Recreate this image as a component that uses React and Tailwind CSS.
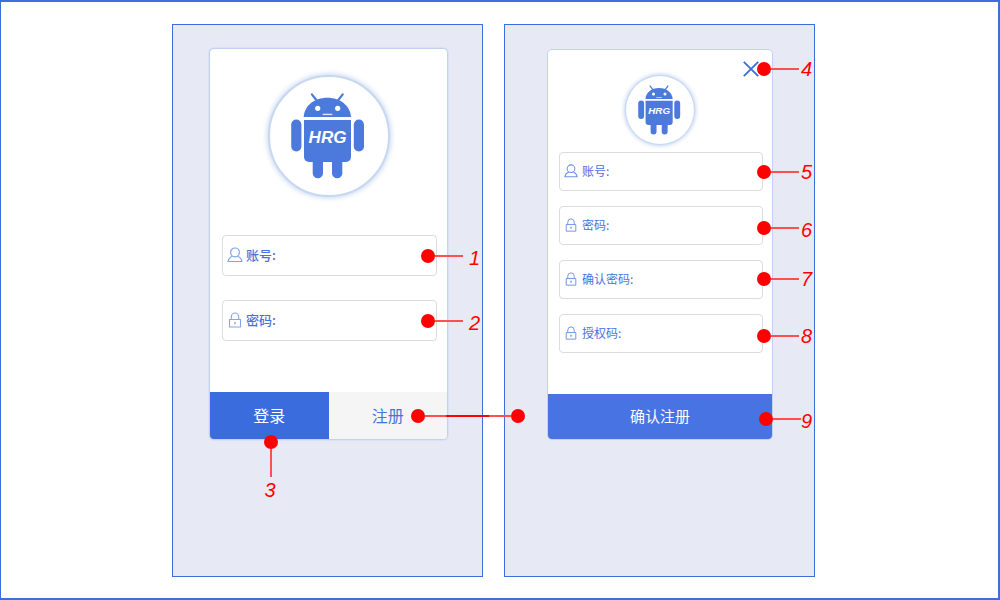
import React from "react";

function UserIcon({ className }) {
  return (
    <svg viewBox="0 0 16 16" className={className} fill="none" stroke="currentColor" strokeWidth="1.2" aria-hidden="true">
      <circle cx="8" cy="5.4" r="4.4" />
      <path d="M5.4 9.2C3 10.2 1.4 12 1 14.5H15C14.6 12 13 10.2 10.6 9.2" />
    </svg>
  );
}

function LockIcon({ className }) {
  return (
    <svg viewBox="0 0 16 16" className={className} fill="none" stroke="currentColor" strokeWidth="1.1" aria-hidden="true">
      <path d="M2.5 7.5H13.5V15H2.5Z" />
      <path d="M4.3 7.5V4.9A3.7 3.9 0 0 1 11.7 4.9V7.5" />
      <path d="M7.2 10.5H8.8M8 10.5V12.6" />
    </svg>
  );
}

function RobotLogo({ className }) {
  return (
    <svg viewBox="0 0 118 118" className={className} role="img" aria-label="HRG">
      <g transform="translate(-2 -2)" fill="#4c7adc">
        <path d="M43.9 19.4L49 26M74.7 19.4L69.6 26" stroke="#4c7adc" strokeWidth="2.2" strokeLinecap="round" />
        <path d="M35.7 42C36.2 31 46 22.7 59.3 22.7S82.4 31 83 42Z" />
        <path d="M36 45H83V82A5 5 0 0 1 78 87H41A5 5 0 0 1 36 82Z" />
        <rect x="23.2" y="44.5" width="10.2" height="32" rx="5.1" />
        <rect x="85.8" y="44.5" width="10.2" height="32" rx="5.1" />
        <path d="M44.7 84H55V98.2A5.15 5.15 0 0 1 44.7 98.2Z" />
        <path d="M64 84H74.3V98.2A5.15 5.15 0 0 1 64 98.2Z" />
        <circle cx="49.7" cy="33.3" r="2.6" fill="#fff" />
        <circle cx="69.7" cy="33.3" r="2.6" fill="#fff" />
        <path d="M54.7 39.4H64.3" stroke="#dbe5fa" strokeWidth="1.4" />
        <text x="59.5" y="67.5" textAnchor="middle" fill="#fff" fontSize="17" fontWeight="700" fontStyle="italic" fontFamily="Liberation Sans, Arial, sans-serif">
          HRG
        </text>
      </g>
    </svg>
  );
}

function Dot() {
  return <span className="size-3.5 shrink-0 rounded-full bg-[#ff0000]" />;
}

function Callout({ number, className, gap = "gap-0.5", low = false }) {
  return (
    <span className={`pointer-events-none absolute z-10 flex h-5 items-center ${gap} ${className}`}>
      <span className="flex items-center">
        <Dot />
        <span className="h-0.5 w-7 bg-[#ff5050]" />
      </span>
      <span
        className={`font-['Liberation_Sans',Arial,sans-serif] text-[20px] leading-5 text-[#ff0000] italic ${
          low ? "pt-1" : ""
        }`}
      >
        {number}
      </span>
    </span>
  );
}

function Field({ id, label, type, icon: Icon, large, children }) {
  return (
    <div
      className={`relative flex items-center rounded border border-[#dcdcdc] bg-white pb-0.5 pl-1 ${
        large ? "h-[41px] gap-[3px] text-[13px] font-medium" : "h-[39px] gap-1 text-[12px]"
      }`}
    >
      <Icon className={large ? "size-4 text-[#86a5ea]" : "size-3.5 text-[#6f93e6]"} />
      <label htmlFor={id} className="shrink-0 text-[#4873dc]">
        {label}
      </label>
      <input id={id} type={type} className="h-full min-w-0 flex-1 bg-transparent px-1 outline-none" />
      {children}
    </div>
  );
}

function Screen({ children }) {
  return <section className="w-full max-w-[311px] border border-[#3c6fdc] bg-[#e7eaf5] pb-34">{children}</section>;
}

function LoginCard() {
  return (
    <form className="mt-[23px] mr-[34px] ml-9 flex flex-col rounded-[5px] border border-[#c3d2f2] bg-white shadow-[0_0_2px_#b9cbf2]">
      <div className="mt-[26px] self-center rounded-full border-2 border-[#c8d8f2] bg-white shadow-[0_0_6px_#b4c9ea]">
        <RobotLogo className="size-[118px]" />
      </div>
      <div className="mt-[38px] flex flex-col gap-6 pr-2.5 pl-3">
        <Field id="login-account" label="账号:" type="text" icon={UserIcon} large>
          <Callout number="1" className="top-2.5 left-full -ml-[15px]" gap="gap-1.5" low />
        </Field>
        <Field id="login-password" label="密码:" type="password" icon={LockIcon} large>
          <Callout number="2" className="top-2.5 left-full -ml-[15px]" gap="gap-1.5" low />
        </Field>
      </div>
      <div className="mt-[51px] grid grid-cols-2 text-[16px]">
        <div className="relative">
          <button type="button" className="h-[47px] w-full rounded-bl bg-[#3b6cde] pb-0.5 text-white">
            登录
          </button>
          <span className="pointer-events-none absolute top-[43px] left-[54px] z-10 flex flex-col items-center">
            <Dot />
            <span className="h-7 w-0.5 bg-[#ff5050]" />
            <span className="mt-[3px] pr-0.5 font-['Liberation_Sans',Arial,sans-serif] text-[20px] leading-5 text-[#ff0000] italic">
              3
            </span>
          </span>
        </div>
        <div className="relative">
          <button type="button" className="h-[47px] w-full rounded-br bg-[#f5f5f5] pb-0.5 text-[#4873dc]">
            注册
          </button>
          <span className="pointer-events-none absolute top-[17px] left-[82px] z-10 flex items-center">
            <Dot />
            <span className="h-0.5 w-[21px] bg-[#ff5050]" />
            <span className="h-0.5 w-[43px] bg-[#ff0000]" />
            <span className="h-0.5 w-[22px] bg-[#ff5050]" />
            <Dot />
          </span>
        </div>
      </div>
    </form>
  );
}

function RegisterCard() {
  return (
    <form className="relative mt-6 mr-[41px] ml-[42px] flex flex-col rounded-[5px] border border-[#c3d2f2] bg-white">
      <button type="button" aria-label="关闭" className="absolute top-[11px] right-[13px] text-[#3b6cde]">
        <svg viewBox="0 0 16 16" className="size-4" fill="none" stroke="currentColor" strokeWidth="1.8" aria-hidden="true">
          <path d="M.8 .8L15.2 15.2M15.2 .8L.8 15.2" />
        </svg>
      </button>
      <Callout number="4" className="top-[9px] left-full -ml-[15px]" />
      <div className="mt-[25px] self-center rounded-full border border-[#c8d8f2] bg-white shadow-[0_0_5px_#a9c1ea]">
        <RobotLogo className="size-[68px]" />
      </div>
      <div className="mt-[7px] flex flex-col gap-[15px] pr-[9px] pl-[11px]">
        <Field id="register-account" label="账号:" type="text" icon={UserIcon}>
          <Callout number="5" className="top-[9px] left-full -ml-[5px]" />
        </Field>
        <Field id="register-password" label="密码:" type="password" icon={LockIcon}>
          <Callout number="6" className="top-[11px] left-full -ml-[5px]" low />
        </Field>
        <Field id="register-confirm" label="确认密码:" type="password" icon={LockIcon}>
          <Callout number="7" className="top-2 left-full -ml-[5px]" />
        </Field>
        <Field id="register-code" label="授权码:" type="text" icon={LockIcon}>
          <Callout number="8" className="top-[11px] left-full -ml-[5px]" />
        </Field>
      </div>
      <div className="relative mt-[41px]">
        <button type="button" className="h-[45px] w-full rounded-b bg-[#4873e3] text-[15px] text-white">
          确认注册
        </button>
        <Callout number="9" className="top-[15px] left-full -ml-[13px]" gap="gap-0" low />
      </div>
    </form>
  );
}

export default function App() {
  return (
    <main className="flex min-h-screen items-start justify-center gap-[21px] border-2 border-l border-[#3c6fdc] bg-white pt-[22px] pr-3 pb-[21px] font-['Noto_Sans_CJK_SC',sans-serif]">
      <Screen>
        <LoginCard />
      </Screen>
      <Screen>
        <RegisterCard />
      </Screen>
    </main>
  );
}
